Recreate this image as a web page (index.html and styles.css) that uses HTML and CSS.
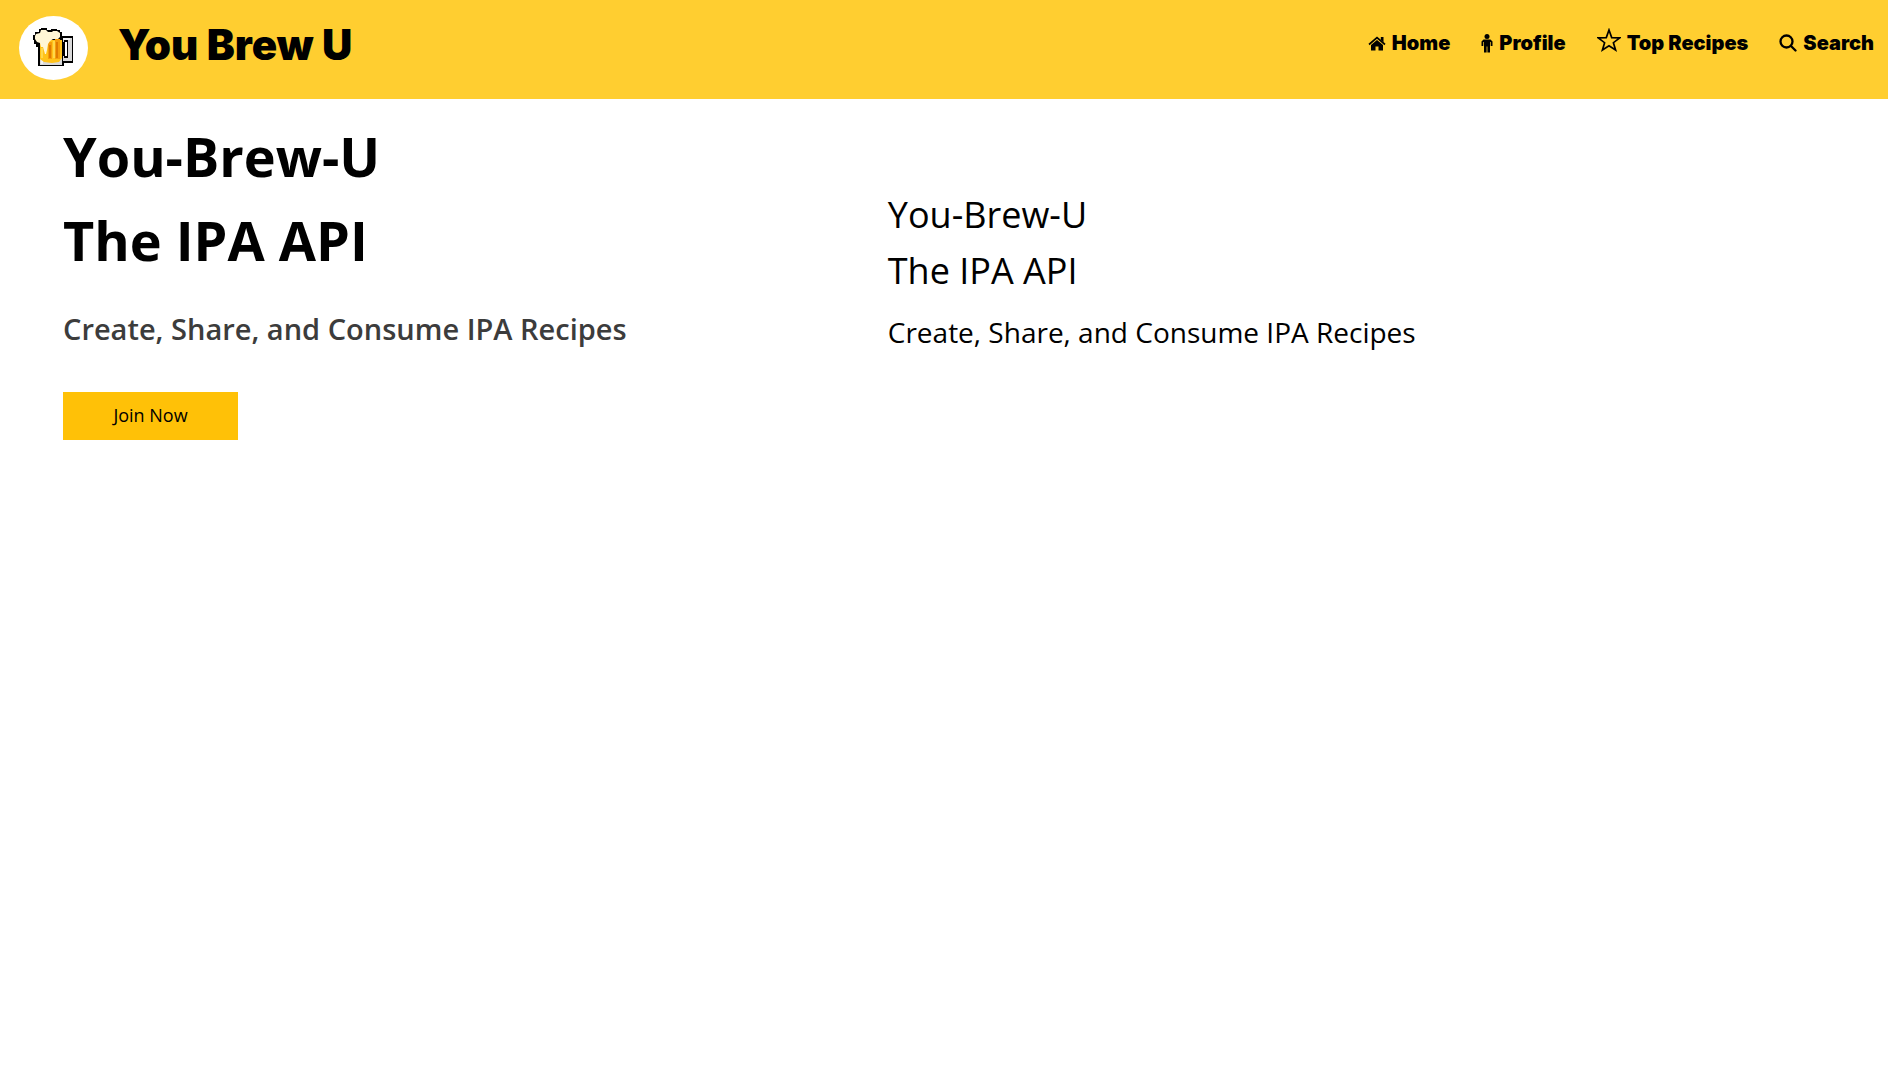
FILE: index.html
```html
<!DOCTYPE html>
<html lang="en">
<head>
<meta charset="utf-8">
<meta name="viewport" content="width=device-width, initial-scale=1">
<title>You Brew U</title>
<link rel="stylesheet" href="styles.css">
</head>
<body>
<header class="site-header">
  <a class="logo" href="#" aria-label="You Brew U home">
    <svg class="mug" viewBox="0 0 42 40" aria-hidden="true">
      <path fill="#000" d="M28 8h12v27h-9v3H5V19H3v-3H1v-4H0V7h2V4h4V1h2V0h6v2h4V1h6v1h3v2h2v4z"/>
      <path fill="#d9d9d9" d="M7 18h22v19H7zM30 10h9v23h-9z"/>
      <path fill="#f2f2f2" d="M30 10h7v2h-7zM8 32h2v4H8z"/>
      <path fill="#000" d="M31 12h4v18h-4v-2h-1V14h1z"/>
      <path fill="#fff" d="M32 14h2v14h-2z"/>
      <path fill="#ffc21a" d="M7 12h22v18l-3 4-7 1-8-1-4-3z"/>
      <path fill="#f59d0c" d="M15 14h4v17h-4zM22 11h5v20h-5z"/>
      <path fill="#e07b00" d="M16 17h2v13h-2zM23 14h2v16h-2z"/>
      <path fill="#ffd84a" d="M8 20h2v10H8zM20 13h2v17h-2z"/>
      <path fill="#fff6d6" d="M8 2h5l2 2h4l1-1h4l3 2v4l-2 2h-5l-3 2-2 3-1 6-1 4h-1l-2-7H8l-1-4-3-1-2-3V8l1-2 4-1z"/>
    </svg>
  </a>
  <p class="brand">You Brew U</p>
  <nav class="nav" aria-label="Main">
    <a href="#"><svg width="18" height="15" viewBox="0 0 18 15" aria-hidden="true"><path d="M9 4l6 5v5.500h-4.500v-4h-3v4H3V9z"/><path fill="none" stroke="#000" stroke-width="1.700" d="M1 8.500L9 1.700l8 6.800"/><path d="M12.800 1h2.700v5.200l-2.700-2.300z"/></svg>Home</a>
    <a href="#"><svg width="12" height="19" viewBox="0 0 12 19" aria-hidden="true"><circle cx="6" cy="2.500" r="2.500"/><path d="M2.500 5.500h7l2 2V12H9.700V8H9v10.500H6.400v-6h-.8v6H3V8h-.7v4H.5V7.500z"/></svg>Profile</a>
    <a href="#"><svg class="star" width="24" height="24" viewBox="0 0 24 24" aria-hidden="true"><path fill="none" stroke="#000" stroke-width="1.700" d="M12 2l2.700 7.600 8.100.2-6.400 4.900 2.200 7.300-6.600-4.200L5.400 22l2.200-7.300-6.400-4.900 8.100-.2z"/></svg>Top Recipes</a>
    <a href="#"><svg width="18" height="18" viewBox="0 0 18 18" aria-hidden="true"><g fill="none" stroke="#000" stroke-width="2.300"><circle cx="7.500" cy="7.500" r="6"/><path stroke-linecap="round" d="M12 12l4.500 4.500"/></g></svg>Search</a>
  </nav>
</header>
<main class="hero">
  <section class="intro">
    <h1>You-Brew-U<br>The IPA API</h1>
    <p class="tagline">Create, Share, and Consume IPA Recipes</p>
    <button class="join" type="button">Join Now</button>
  </section>
  <section class="summary">
    <h2>You-Brew-U<br>The IPA API</h2>
    <p>Create, Share, and Consume IPA Recipes</p>
  </section>
</main>
</body>
</html>
```
FILE: styles.css
```css
* { box-sizing: border-box; }

body {
  margin: 0;
  background: #fff;
  color: #000;
  font-family: "Open Sans", "Noto Sans", sans-serif;
}

h1, h2, p { margin: 0; }

.site-header {
  display: flex;
  align-items: flex-start;
  padding: 16px 14px 19px 19px;
  background: #ffce30;
  font-family: Inter, "Liberation Sans", sans-serif;
  font-weight: 900;
}

.logo {
  display: flex;
  width: 69px;
  height: 64px;
  padding: 12px 0 0 14px;
  border-radius: 50%;
  background: #fff;
}

.mug { width: 42px; height: 40px; }

.brand {
  margin-left: 30px;
  font-size: 42px;
  line-height: 58px;
}

.nav {
  display: flex;
  flex-wrap: wrap;
  gap: 31px;
  margin-left: auto;
  padding-top: 12px;
}

.nav a {
  display: flex;
  align-items: center;
  gap: 6px;
  color: #000;
  font-size: 20px;
  line-height: 30px;
  text-decoration: none;
}

.nav .star { align-self: flex-start; }

.hero {
  display: grid;
  grid-template-columns: 46% 1fr;
  padding: 15px 32px 15px 63px;
}

h1 {
  font-size: 54px;
  font-weight: 700;
  line-height: 84px;
}

.tagline {
  margin-top: 24px;
  color: #3c3c3c;
  font-size: 29px;
  font-weight: 600;
  line-height: 46px;
}

.join {
  width: 175px;
  height: 48px;
  margin-top: 40px;
  padding: 0 0 2px;
  border: 0;
  background: #ffc107;
  color: #000;
  font-family: "Open Sans", "Noto Sans", sans-serif;
  font-size: 18px;
}

.summary { padding-top: 73px; }

h2 {
  font-size: 36px;
  font-weight: 400;
  line-height: 56px;
}

.summary p {
  margin-top: 10px;
  font-size: 28px;
  line-height: 46px;
}
```
